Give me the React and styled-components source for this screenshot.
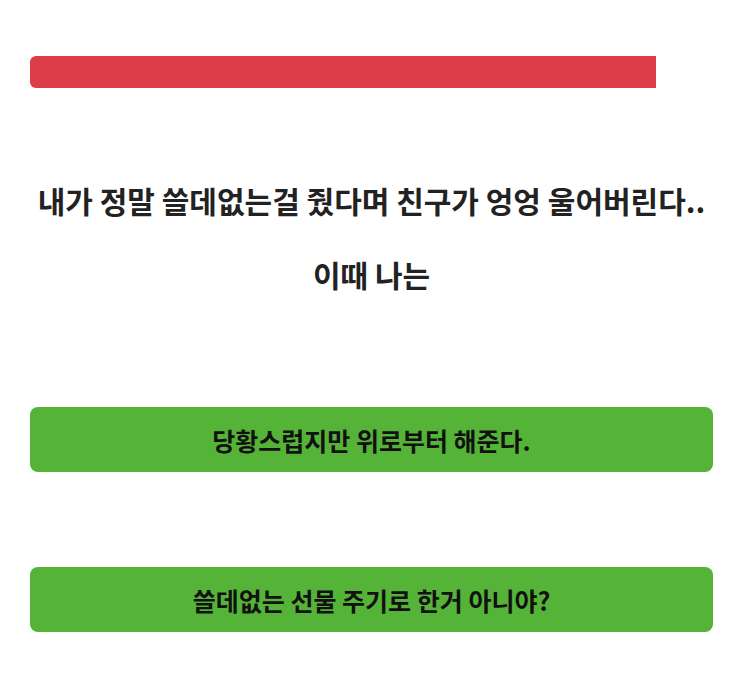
import styled, {createGlobalStyle} from "styled-components";

const GlobalStyle = createGlobalStyle`
  html, body {
    margin: 0;
    padding: 0;
    background: #ffffff;
    font-family: "Noto Sans CJK KR", "Noto Sans", sans-serif;
  }
`;

const Page = styled.div`
  padding: 56px 30px 0;
  display: flex;
  flex-direction: column;
`;

const Track = styled.div`
  height: 32px;
  display: flex;
`;

const Fill = styled.div`
  height: 100%;
  background: #dc3d48;
  border-radius: 6px 0 0 6px;
`;

const Question = styled.div`
  margin-top: 92px;
  display: flex;
  flex-direction: column;
  gap: 34px;
  align-items: center;
`;

const Line = styled.p`
  margin: 0;
  font-size: 30px;
  line-height: 40px;
  font-weight: 700;
  color: #222222;
  white-space: nowrap;
`;

const Answers = styled.div`
  margin-top: 113px;
  display: flex;
  flex-direction: column;
  gap: 95px;
`;

const Answer = styled.button`
  height: 65px;
  border: none;
  border-radius: 8px;
  background: #55b437;
  color: #111111;
  font-family: inherit;
  font-size: 25px;
  font-weight: 700;
  cursor: pointer;
`;

const answers = ["당황스럽지만 위로부터 해준다.", "쓸데없는 선물 주기로 한거 아니야?"];

export default function App() {
  const progress = 626 / 683;
  return (
    <>
      <GlobalStyle/>
      <Page>
        <Track>
          <Fill style={{width: `${progress * 100}%`}}/>
        </Track>
        <Question>
          <Line>내가 정말 쓸데없는걸 줬다며 친구가 엉엉 울어버린다..</Line>
          <Line>이때 나는</Line>
        </Question>
        <Answers>
          {answers.map((a) => (
            <Answer key={a}>{a}</Answer>
          ))}
        </Answers>
      </Page>
    </>
  );
}
